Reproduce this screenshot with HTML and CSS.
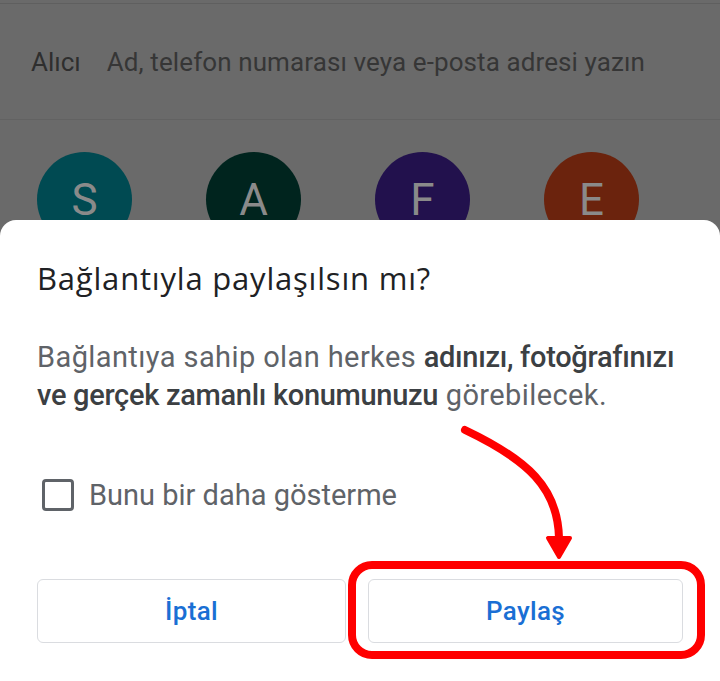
FILE: index.html
```html
<!DOCTYPE html>
<html lang="tr">
<head>
<meta charset="utf-8">
<link rel="stylesheet" href="styles.css">
</head>
<body>
<div class="screen">
  <div class="topline"></div>
  <div class="to-row">
    <span class="to-label">Alıcı</span>
    <span class="to-placeholder">Ad, telefon numarası veya e-posta adresi yazın</span>
  </div>
  <div class="contacts">
    <div class="avatar teal">S</div>
    <div class="avatar dark">A</div>
    <div class="avatar purple">F</div>
    <div class="avatar orange">E</div>
  </div>

  <div class="sheet">
    <h1 class="title">Bağlantıyla paylaşılsın mı?</h1>
    <p class="body">Bağlantıya sahip olan herkes <b>adınızı, fotoğrafınızı ve gerçek zamanlı konumunuzu</b> görebilecek.</p>
    <label class="check-row">
      <span class="checkbox"></span>
      <span class="check-text">Bunu bir daha gösterme</span>
    </label>
    <div class="actions">
      <button class="btn">İptal</button>
      <button class="btn">Paylaş</button>
    </div>
  </div>

  <svg class="annotation" viewBox="0 0 720 681" width="720" height="681">
    <path d="M465 430 C 528 460, 558 488, 559 538" fill="none" stroke="#ff0000" stroke-width="8" stroke-linecap="round"/>
    <polygon points="548,538 570,538 559,557" fill="#ff0000" stroke="#ff0000" stroke-width="4" stroke-linejoin="round"/>
    <rect x="352" y="565" width="349" height="90" rx="20" ry="20" fill="none" stroke="#ff0000" stroke-width="8"/>
  </svg>
</div>
</body>
</html>
```
FILE: styles.css
```css
* { box-sizing: border-box; }
html, body { margin: 0; padding: 0; }
body {
  width: 720px;
  height: 681px;
  overflow: hidden;
  font-family: Roboto, "Noto Sans", sans-serif;
  background: #6a6a6a;
}
.screen {
  position: relative;
  width: 720px;
  height: 681px;
  background: #6a6a6a;
}
.topline {
  height: 4px;
  border-bottom: 1px solid #5f5f5f;
}
.to-row {
  display: flex;
  align-items: center;
  gap: 26px;
  height: 116px;
  padding-left: 31px;
  border-bottom: 1px solid #626262;
  font-size: 26px;
}
.to-label { color: #2e2e2e; }
.to-placeholder { color: #363636; letter-spacing: 0.1px; }
.contacts {
  display: flex;
  gap: 74px;
  padding: 32px 0 0 37px;
}
.avatar {
  width: 95px;
  height: 95px;
  border-radius: 50%;
  display: flex;
  align-items: center;
  justify-content: center;
  font-size: 44px;
  color: #8a8a8a;
}
.teal { background: #004a52; }
.dark { background: #00241e; }
.purple { background: #22114d; }
.orange { background: #6b230d; }

.sheet {
  position: absolute;
  left: 0;
  right: 0;
  top: 220px;
  bottom: 0;
  background: #ffffff;
  border-radius: 16px 16px 0 0;
  padding: 41px 18px 0 37px;
}
.title {
  margin: 0;
  font-family: "Open Sans", Roboto, sans-serif;
  font-size: 31px;
  letter-spacing: 0.8px;
  line-height: 34px;
  font-weight: 400;
  color: #202124;
}
.body {
  margin: 43px 0 0 0;
  font-size: 29px;
  letter-spacing: 0.4px;
  line-height: 38px;
  color: #5f6368;
}
.body b {
  font-weight: 500;
  letter-spacing: -0.3px;
  color: #3c4043;
}
.check-row {
  display: flex;
  align-items: center;
  height: 32px;
  margin-top: 65px;
  padding-left: 5px;
  gap: 15px;
}
.checkbox {
  width: 32px;
  height: 32px;
  border: 3px solid #5f6368;
  border-radius: 4px;
}
.check-text {
  font-size: 29px;
  color: #5f6368;
}
.actions {
  display: grid;
  grid-template-columns: 309px 315px;
  gap: 22px;
  margin-top: 68px;
}
.btn {
  height: 64px;
  background: #ffffff;
  border: 1.5px solid #dadce0;
  border-radius: 6px;
  font-family: Roboto, "Noto Sans", sans-serif;
  font-size: 26px;
  font-weight: 500;
  letter-spacing: 0.3px;
  color: #1a6fd4;
}
.annotation {
  position: absolute;
  left: 0;
  top: 0;
  pointer-events: none;
}
```
